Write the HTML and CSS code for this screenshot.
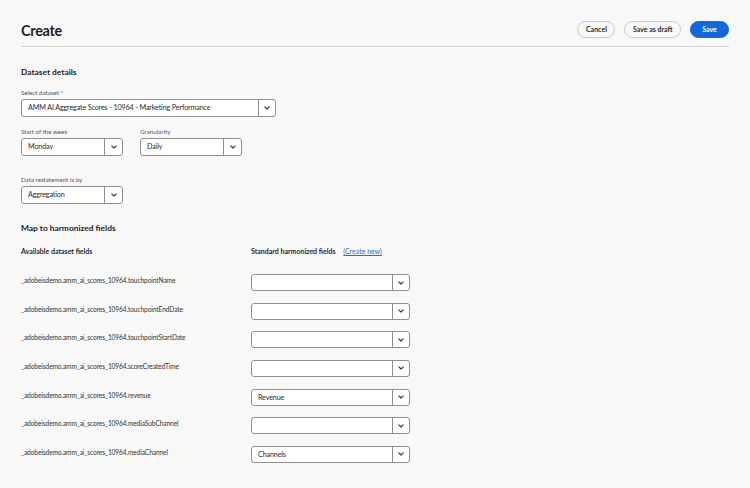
FILE: index.html
```html
<!DOCTYPE html>
<html lang="en">
<head>
<meta charset="utf-8">
<title>Create</title>
<link rel="stylesheet" href="styles.css">
</head>
<body>
<div class="page">
  <header class="header">
    <h1 class="title">Create</h1>
    <div class="actions">
      <button class="btn btn-secondary">Cancel</button>
      <button class="btn btn-secondary">Save as draft</button>
      <button class="btn btn-primary">Save</button>
    </div>
  </header>

  <h2 class="section-title first">Dataset details</h2>

  <div class="field">
    <div class="label">Select dataset <span class="req">*</span></div>
    <div class="select select-wide">
      <span class="value">AMM AI Aggregate Scores - 10964 - Marketing Performance</span>
      <span class="chev"><svg width="6" height="4" viewBox="0 0 6 4"><path d="M0.8 0.9 L3 3 L5.2 0.9" fill="none" stroke="#3a3a3a" stroke-width="1.2" stroke-linecap="round" stroke-linejoin="round"/></svg></span>
    </div>
  </div>

  <div class="field-row">
    <div class="field">
      <div class="label">Start of the week</div>
      <div class="select select-small">
        <span class="value">Monday</span>
        <span class="chev"><svg width="6" height="4" viewBox="0 0 6 4"><path d="M0.8 0.9 L3 3 L5.2 0.9" fill="none" stroke="#3a3a3a" stroke-width="1.2" stroke-linecap="round" stroke-linejoin="round"/></svg></span>
      </div>
    </div>
    <div class="field">
      <div class="label">Granularity</div>
      <div class="select select-small">
        <span class="value">Daily</span>
        <span class="chev"><svg width="6" height="4" viewBox="0 0 6 4"><path d="M0.8 0.9 L3 3 L5.2 0.9" fill="none" stroke="#3a3a3a" stroke-width="1.2" stroke-linecap="round" stroke-linejoin="round"/></svg></span>
      </div>
    </div>
  </div>

  <div class="field field-spaced">
    <div class="label">Data restatement is by</div>
    <div class="select select-small">
      <span class="value">Aggregation</span>
      <span class="chev"><svg width="6" height="4" viewBox="0 0 6 4"><path d="M0.8 0.9 L3 3 L5.2 0.9" fill="none" stroke="#3a3a3a" stroke-width="1.2" stroke-linecap="round" stroke-linejoin="round"/></svg></span>
    </div>
  </div>

  <h2 class="section-title">Map to harmonized fields</h2>

  <div class="map-head">
    <div class="col-left">Available dataset fields</div>
    <div class="col-right">Standard harmonized fields <a class="link" href="#">(Create new)</a></div>
  </div>

  <div class="map-rows">
    <div class="map-row">
      <div class="col-left name">_adobeisdemo.amm_ai_scores_10964.touchpointName</div>
      <div class="select select-map"><span class="value"></span><span class="chev"><svg width="6" height="4" viewBox="0 0 6 4"><path d="M0.8 0.9 L3 3 L5.2 0.9" fill="none" stroke="#3a3a3a" stroke-width="1.2" stroke-linecap="round" stroke-linejoin="round"/></svg></span></div>
    </div>
    <div class="map-row">
      <div class="col-left name">_adobeisdemo.amm_ai_scores_10964.touchpointEndDate</div>
      <div class="select select-map"><span class="value"></span><span class="chev"><svg width="6" height="4" viewBox="0 0 6 4"><path d="M0.8 0.9 L3 3 L5.2 0.9" fill="none" stroke="#3a3a3a" stroke-width="1.2" stroke-linecap="round" stroke-linejoin="round"/></svg></span></div>
    </div>
    <div class="map-row">
      <div class="col-left name">_adobeisdemo.amm_ai_scores_10964.touchpointStartDate</div>
      <div class="select select-map"><span class="value"></span><span class="chev"><svg width="6" height="4" viewBox="0 0 6 4"><path d="M0.8 0.9 L3 3 L5.2 0.9" fill="none" stroke="#3a3a3a" stroke-width="1.2" stroke-linecap="round" stroke-linejoin="round"/></svg></span></div>
    </div>
    <div class="map-row">
      <div class="col-left name">_adobeisdemo.amm_ai_scores_10964.scoreCreatedTime</div>
      <div class="select select-map"><span class="value"></span><span class="chev"><svg width="6" height="4" viewBox="0 0 6 4"><path d="M0.8 0.9 L3 3 L5.2 0.9" fill="none" stroke="#3a3a3a" stroke-width="1.2" stroke-linecap="round" stroke-linejoin="round"/></svg></span></div>
    </div>
    <div class="map-row">
      <div class="col-left name">_adobeisdemo.amm_ai_scores_10964.revenue</div>
      <div class="select select-map"><span class="value">Revenue</span><span class="chev"><svg width="6" height="4" viewBox="0 0 6 4"><path d="M0.8 0.9 L3 3 L5.2 0.9" fill="none" stroke="#3a3a3a" stroke-width="1.2" stroke-linecap="round" stroke-linejoin="round"/></svg></span></div>
    </div>
    <div class="map-row">
      <div class="col-left name">_adobeisdemo.amm_ai_scores_10964.mediaSubChannel</div>
      <div class="select select-map"><span class="value"></span><span class="chev"><svg width="6" height="4" viewBox="0 0 6 4"><path d="M0.8 0.9 L3 3 L5.2 0.9" fill="none" stroke="#3a3a3a" stroke-width="1.2" stroke-linecap="round" stroke-linejoin="round"/></svg></span></div>
    </div>
    <div class="map-row">
      <div class="col-left name">_adobeisdemo.amm_ai_scores_10964.mediaChannel</div>
      <div class="select select-map"><span class="value">Channels</span><span class="chev"><svg width="6" height="4" viewBox="0 0 6 4"><path d="M0.8 0.9 L3 3 L5.2 0.9" fill="none" stroke="#3a3a3a" stroke-width="1.2" stroke-linecap="round" stroke-linejoin="round"/></svg></span></div>
    </div>
  </div>
</div>
</body>
</html>
```

FILE: styles.css
```css
* { box-sizing: border-box; }

html, body {
  margin: 0;
  padding: 0;
  background: #f8f8f8;
  font-family: Lato, "Liberation Sans", sans-serif;
  color: #2c2c2c;
}

.page {
  padding: 0 21px;
}

.header {
  display: flex;
  justify-content: space-between;
  align-items: flex-start;
  height: 47px;
  padding-top: 21px;
  border-bottom: 1px solid #d3d3d3;
}

.title {
  margin: 1px 0 0;
  font-size: 14.5px;
  line-height: 18px;
  font-weight: 700;
  color: #1f1f1f;
  letter-spacing: -0.3px;
}

.actions {
  display: flex;
  gap: 9px;
}

.btn {
  height: 17px;
  border-radius: 9px;
  font-family: inherit;
  font-size: 7px;
  font-weight: 700;
  padding: 0 7.5px;
  line-height: 15px;
  cursor: pointer;
}

.btn-secondary {
  background: #f8f8f8;
  border: 1px solid #c9c9c9;
  color: #2c2c2c;
}

.btn-primary {
  background: #1467d8;
  border: 1px solid #1467d8;
  color: #fff;
  width: 39px;
}

.section-title {
  margin: 18px 0 0;
  font-size: 8.4px;
  line-height: 12px;
  font-weight: 700;
  color: #222;
}

.section-title.first {
  margin-top: 19px;
}

.field {
  margin-top: 10px;
}

.field-row {
  display: flex;
  gap: 17px;
}

.field-spaced {
  margin-top: 19px;
}

.label {
  font-size: 6.2px;
  line-height: 9px;
  color: #555;
  margin-bottom: 2px;
}

.select {
  display: flex;
  align-items: stretch;
  height: 18px;
  background: #fff;
  border: 1px solid #8f8f8f;
  border-radius: 3px;
}

.select .value {
  flex: 1;
  padding-left: 6px;
  font-size: 7.2px;
  letter-spacing: -0.15px;
  line-height: 16px;
  color: #2a2a2a;
  white-space: nowrap;
  overflow: hidden;
}

.select .chev {
  width: 17px;
  border-left: 1px solid #8f8f8f;
  display: flex;
  align-items: center;
  justify-content: center;
}

.select-wide { width: 255px; }
.select-small { width: 102px; }
.select-small .chev { width: 18px; }
.select-map { width: 159px; height: 17px; }
.select-map .value { line-height: 15px; }

.map-head {
  display: flex;
  margin-top: 12px;
  font-size: 7px;
  line-height: 10px;
  font-weight: 700;
  color: #2a2a2a;
}

.col-left {
  width: 230px;
  flex: none;
}

.link {
  margin-left: 6px;
  color: #2e6bd2;
  font-weight: 400;
  text-decoration: underline;
}

.map-rows {
  margin-top: 18px;
}

.map-row {
  display: flex;
  align-items: flex-start;
  height: 28.67px;
}

.name {
  font-size: 6.6px;
  letter-spacing: -0.1px;
  line-height: 12px;
  color: #333;
}
```
